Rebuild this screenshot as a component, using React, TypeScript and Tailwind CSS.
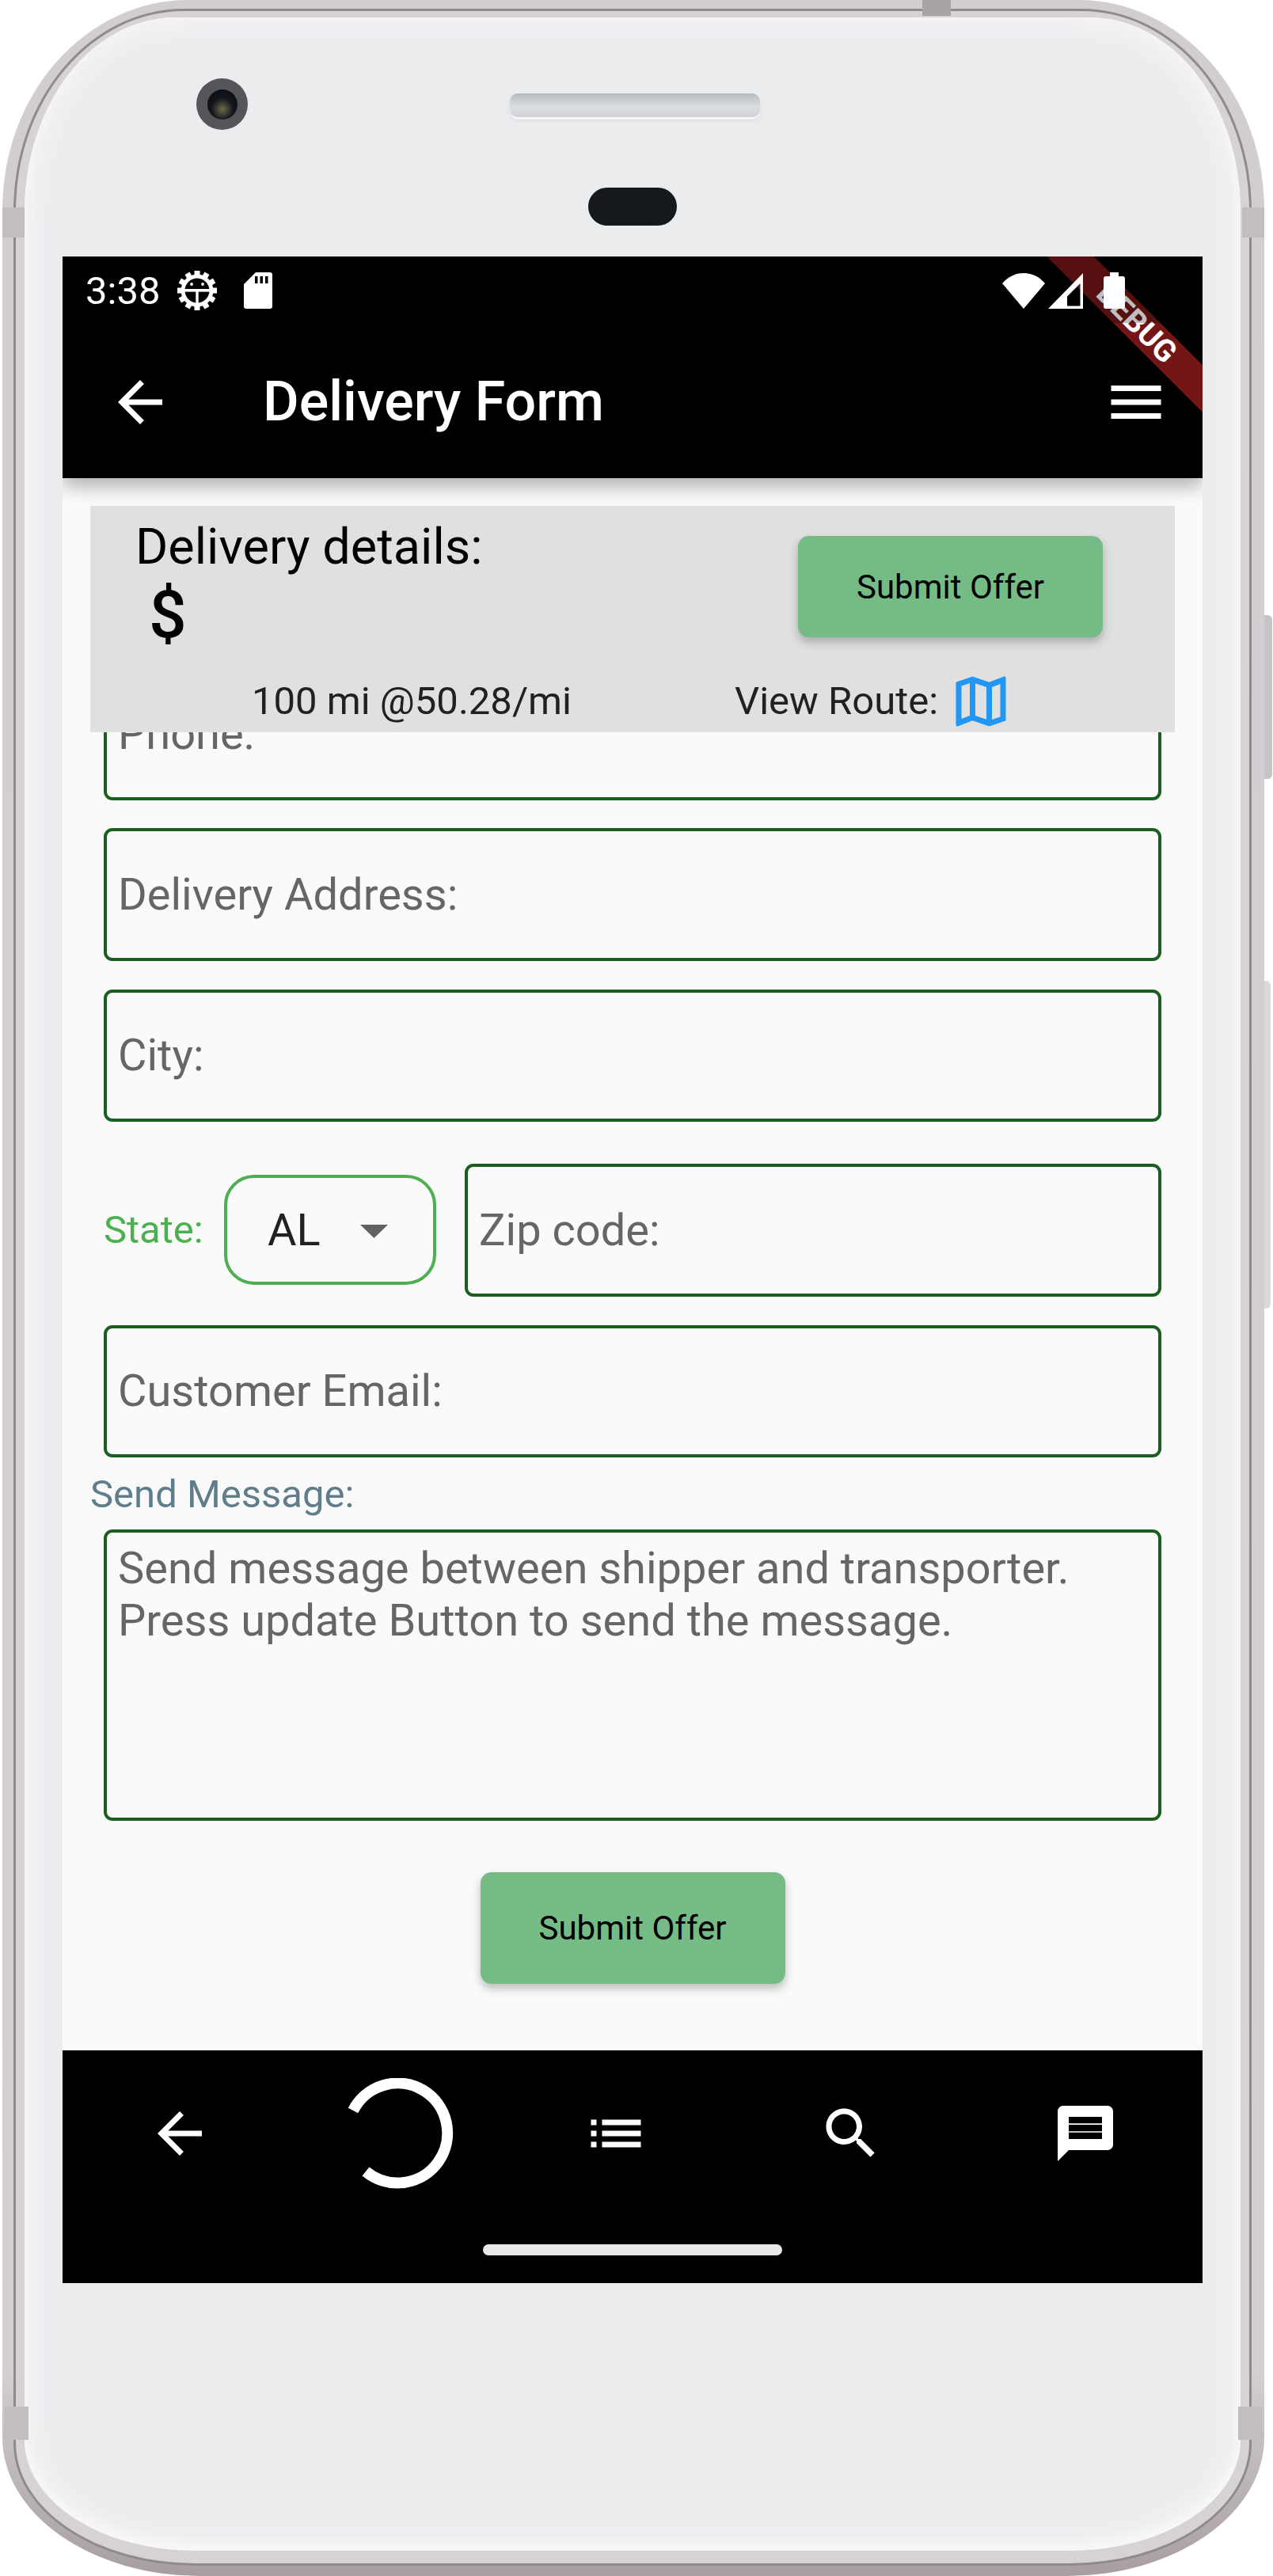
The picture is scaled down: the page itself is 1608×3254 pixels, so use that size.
import type { ReactNode } from 'react';

const ROBOTO = 'font-["Roboto",sans-serif]';

function MaterialIcon({ d, className }: { d: string; className?: string }) {
  return (
    <svg viewBox="0 0 24 24" className={className} fill="currentColor" aria-hidden="true">
      <path d={d} />
    </svg>
  );
}

const ARROW_BACK = 'M20 11H7.83l5.59-5.59L12 4l-8 8 8 8 1.41-1.41L7.83 13H20v-2z';
const MENU = 'M3 18h18v-2H3v2zm0-5h18v-2H3v2zm0-7v2h18V6H3z';
const LIST = 'M3 13h2v-2H3v2zm0 4h2v-2H3v2zm0-8h2V7H3v2zm4 4h14v-2H7v2zm0 4h14v-2H7v2zM7 7v2h14V7H7z';
const SEARCH =
  'M15.5 14h-.79l-.28-.27C15.41 12.59 16 11.11 16 9.5 16 5.91 13.09 3 9.5 3S3 5.91 3 9.5 5.91 16 9.5 16c1.61 0 3.09-.59 4.23-1.57l.27.28v.79l5 4.99L20.49 19l-4.99-5zm-6 0C7.01 14 5 11.99 5 9.5S7.01 5 9.5 5 14 7.01 14 9.5 11.99 14 9.5 14z';
const CHAT =
  'M20 2H4c-1.1 0-1.99.9-1.99 2L2 22l4-4h14c1.1 0 2-.9 2-2V4c0-1.1-.9-2-2-2zM6 6h12v2.35H6zm0 2.83h12v2.35H6zm0 2.82h12V14H6z';
const MAP =
  'M20.5 3l-.16.03L15 5.1 9 3 3.36 4.9c-.21.07-.36.25-.36.48V20.5c0 .28.22.5.5.5l.16-.03L9 18.9l6 2.1 5.64-1.9c.21-.07.36-.25.36-.48V3.5c0-.28-.22-.5-.5-.5zM10 5.47l4 1.4v11.66l-4-1.4V5.47zm-5 .99l3-1.01v11.7l-3 1.16V6.46zm14 11.08l-3 1.01V6.86l3-1.16v11.84z';

function GearBugIcon() {
  const teeth = Array.from({ length: 12 }, (_, i) => i * 30);
  return (
    <svg viewBox="0 0 50 50" className="ml-[22px] h-[50px] w-[50px]" aria-hidden="true">
      {teeth.map((deg) => (
        <rect key={deg} x="21.5" y="0" width="7" height="9" fill="#fff" transform={`rotate(${deg} 25 25)`} />
      ))}
      <circle cx="25" cy="25" r="20.5" fill="#fff" />
      <circle cx="25" cy="25" r="15.5" fill="#000" />
      <rect x="8" y="23" width="34" height="3.6" fill="#fff" />
      <rect x="23.3" y="25" width="3.4" height="18" fill="#fff" />
      <circle cx="18" cy="17" r="1.9" fill="#fff" />
      <circle cx="32" cy="17" r="1.9" fill="#fff" />
    </svg>
  );
}

function SdCardIcon() {
  return (
    <svg viewBox="0 0 36 46" className="ml-[34px] h-[46px] w-[36px]" aria-hidden="true">
      <path
        fill="#fff"
        fillRule="evenodd"
        d="M15 0h18a3 3 0 0 1 3 3v40a3 3 0 0 1-3 3H3a3 3 0 0 1-3-3V15zM14 5v9h3.5V5zm6.5 0v9H24V5zm6.5 0v9h3.5V5z"
      />
    </svg>
  );
}

function StatusBar() {
  return (
    <div className="absolute inset-x-0 top-0 z-40 flex h-[84px] items-center pl-[29px] pt-[2px] text-white">
      <span className="text-[49px] leading-none">3:38</span>
      <GearBugIcon />
      <SdCardIcon />
      <div className="ml-auto mr-[98px] flex items-center">
        <svg viewBox="0 0 54 45" className="h-[45px] w-[54px]" aria-hidden="true">
          <path fill="#fff" d="M27 45 0 13C7 5 16 0 27 0s20 5 27 13z" />
        </svg>
        <svg viewBox="0 0 45 45" className="ml-[4px] h-[45px] w-[45px]" aria-hidden="true">
          <path fill="#fff" fillRule="evenodd" d="M44 0v45H0zM40.5 13 24 29.5v12h16.5z" />
        </svg>
        <svg viewBox="0 0 27 46" className="ml-[25px] h-[46px] w-[27px]" aria-hidden="true">
          <path fill="#fff" d="M8 0h11v5h5a3 3 0 0 1 3 3v35a3 3 0 0 1-3 3H3a3 3 0 0 1-3-3V8a3 3 0 0 1 3-3h5z" />
        </svg>
      </div>
    </div>
  );
}

function Field({ label, className = '' }: { label: string; className?: string }) {
  return (
    <div
      className={`flex h-[167.5px] items-center rounded-[11px] border-4 border-[#1b5e20] px-[14px] text-[56px] text-[#666666] ${className}`}
    >
      {label}
    </div>
  );
}

function OfferButton({ className = '' }: { className?: string }) {
  return (
    <div
      className={`flex items-center justify-center rounded-[14px] bg-[#74bb85] text-[42px] text-black shadow-[0_6px_12px_rgba(0,0,0,0.25)] ${className}`}
    >
      Submit Offer
    </div>
  );
}

function NavSlot({ width, children }: { width: string; children: ReactNode }) {
  return <div className={`flex items-center justify-center ${width}`}>{children}</div>;
}

function DetailsPanel() {
  return (
    <div className="relative z-10 mx-[35px] mt-[35px] flex h-[286px] shrink-0 flex-col bg-[#e0e0e0] text-black">
      <div className="flex">
        <div className="flex w-[894px] flex-col pl-[57px]">
          <span className="mt-[15px] text-[63px] leading-[74px]">Delivery details:</span>
          <span className="ml-[17px] mt-[6px] text-[84px] font-medium leading-[86px]">$</span>
        </div>
        <OfferButton className="mt-[38px] h-[128px] w-[385px]" />
      </div>
      <div className="mt-[24px] flex h-[84px] items-center text-[49px] text-[#212121]">
        <span className="ml-[204px] w-[610px]">100 mi @50.28/mi</span>
        <span>View Route:</span>
        <MaterialIcon d={MAP} className="ml-[12px] h-[84px] w-[84px] text-[#2196f3]" />
      </div>
    </div>
  );
}

function FormBody() {
  return (
    <div className="flex min-h-0 flex-1 flex-col overflow-hidden">
      <div className="mx-[52px] -mt-[81.5px] flex flex-col">
        <Field label="Phone:" />
        <Field label="Delivery Address:" className="mt-[35px]" />
        <Field label="City:" className="mt-[36px]" />
        <div className="mt-[53px] flex items-center">
          <span className="w-[152px] text-[49px] text-[#4caf50]">State:</span>
          <div className="flex h-[139px] w-[268px] items-center rounded-[38px] border-4 border-[#4caf50] pl-[51px]">
            <span className="w-[117px] text-[56px] text-[#212121]">AL</span>
            <svg viewBox="0 0 35 17" className="mt-[3px] h-[17px] w-[35px]" aria-hidden="true">
              <path d="M0 0h35L17.5 17z" fill="#616161" />
            </svg>
          </div>
          <Field label="Zip code:" className="ml-[36px] flex-1" />
        </div>
        <Field label="Customer Email:" className="mt-[36px]" />
      </div>
      <span className="ml-[35px] mt-[20px] text-[49px] leading-[54px] text-[#607d8b]">Send Message:</span>
      <div className="mx-[52px] mt-[17px] h-[368px] rounded-[11px] border-4 border-[#1b5e20] px-[14px] pt-[12px] text-[56px] leading-[66px] text-[#666666]">
        <p>Send message between shipper and transporter.</p>
        <p>Press update Button to send the message.</p>
      </div>
      <div className="mt-[65px] flex justify-center">
        <OfferButton className="h-[141px] w-[385px]" />
      </div>
    </div>
  );
}

function BottomNav() {
  return (
    <div className="flex h-[294px] shrink-0 flex-col bg-black text-white">
      <div className="mt-[63px] flex h-[84px] items-center pl-[106px]">
        <NavSlot width="w-[84px]">
          <MaterialIcon d={ARROW_BACK} className="h-[84px] w-[84px]" />
        </NavSlot>
        <NavSlot width="ml-[192px] w-[84px]">
          <svg viewBox="0 0 140 140" className="h-[140px] w-[140px] shrink-0" fill="none" aria-hidden="true">
            <path d="M13 41A63 63 0 1 1 29 118" stroke="#fff" strokeWidth="14" />
          </svg>
        </NavSlot>
        <NavSlot width="ml-[191px] w-[84px]">
          <MaterialIcon d={LIST} className="h-[84px] w-[84px]" />
        </NavSlot>
        <NavSlot width="ml-[213px] w-[84px]">
          <MaterialIcon d={SEARCH} className="h-[84px] w-[84px]" />
        </NavSlot>
        <NavSlot width="ml-[212px] w-[84px]">
          <MaterialIcon d={CHAT} className="h-[84px] w-[84px]" />
        </NavSlot>
      </div>
      <div className="mx-auto mt-[98px] h-[14px] w-[378px] rounded-full bg-[#e8e8e8]" />
    </div>
  );
}

function AppHeader() {
  return (
    <div className="relative z-20 flex h-[280px] shrink-0 flex-col bg-black pt-[84px] text-white shadow-[0_10px_22px_rgba(0,0,0,0.3)]">
      <div className="flex h-[196px] items-center pt-[3px]">
        <MaterialIcon d={ARROW_BACK} className="ml-[56px] h-[84px] w-[84px]" />
        <span className="ml-[113px] text-[70px] font-medium">Delivery Form</span>
        <MaterialIcon d={MENU} className="ml-auto mr-[42px] h-[84px] w-[84px]" />
      </div>
    </div>
  );
}

function DebugBanner() {
  return (
    <div className="pointer-events-none absolute inset-0 z-30 overflow-hidden">
      <div className="absolute right-[-114px] top-[60px] flex h-[42px] w-[400px] rotate-45 items-center justify-center bg-[#741616] pl-[8px] text-[39px] font-bold text-white">
        DEBUG
      </div>
      <div className="absolute inset-x-0 top-0 h-[84px] bg-black/25" />
    </div>
  );
}

function PhoneFace() {
  return (
    <div className="relative h-[3200px] rounded-t-[190px_245px] rounded-b-[215px_140px] bg-[#ebecee] shadow-[inset_0_0_45px_#f9f9fa,inset_0_-6px_16px_#f9f9fa] px-[48px] pt-[302px]">
      {/* camera */}
      <div className="absolute left-[217px] top-[77px] flex h-[65px] w-[65px] items-center justify-center rounded-full bg-[#55555a]">
        <div className="h-[38px] w-[38px] rounded-full bg-[radial-gradient(circle_at_50%_65%,#6b6a4a_0,#12151c_45%,#0a0c12_100%)]" />
      </div>
      {/* speaker */}
      <div className="absolute left-[613px] top-[96px] h-[30px] w-[316px] rounded-[10px] bg-[linear-gradient(180deg,#b6babf,#dcdee1_55%,#cfd2d5)] shadow-[0_3px_2px_#f8f8f9,0_4px_4px_#d2d3d6]" />
      {/* front sensor */}
      <div className="absolute left-[712px] top-[215px] h-[48px] w-[112px] rounded-[24px] bg-[#15181c]" />

      <div className={`relative flex h-[2560px] flex-col overflow-hidden bg-[#fafafa] ${ROBOTO}`}>
        <AppHeader />
        <DetailsPanel />
        <FormBody />
        <BottomNav />
        <DebugBanner />
        <StatusBar />
      </div>
    </div>
  );
}

export default function App() {
  return (
    <div className="relative h-[3254px] w-[1608px] overflow-hidden bg-white">
      {/* side keys and antenna bands of the phone body */}
      <div className="absolute left-[1590px] top-[777px] h-[207px] w-[17px] rounded-r-[6px] bg-[#c3c5c8]" />
      <div className="absolute left-[1590px] top-[1239px] h-[414px] w-[15px] rounded-r-[6px] bg-[#d9dad6]" />
      <div className="h-[3254px] w-[1597px] pl-[3px]">
        <div className="relative h-[3254px] rounded-t-[235px_265px] rounded-b-[250px_175px] bg-[linear-gradient(180deg,#d2cdd0_0,#d4cfd2_92%,#a79ea3_100%)] pl-[14px] pr-[16px] pt-[11px]">
          <div className="h-[3230px] rounded-t-[215px_255px] rounded-b-[230px_155px] border-[3px] border-[#8f8a8d] bg-[#d7d2d5] px-[11px] pt-[8px]">
            <PhoneFace />
          </div>
          <div className="absolute left-[1162px] top-0 h-[20px] w-[36px] bg-[#a8a3a6]" />
          <div className="absolute left-0 top-[262px] h-[38px] w-[28px] bg-[#c2bdc0]" />
          <div className="absolute right-0 top-[262px] h-[38px] w-[28px] bg-[#c2bdc0]" />
          <div className="absolute left-[3px] top-[3040px] h-[42px] w-[30px] bg-[#c2bdc0]" />
          <div className="absolute right-[3px] top-[3040px] h-[42px] w-[30px] bg-[#c2bdc0]" />
        </div>
      </div>
    </div>
  );
}
